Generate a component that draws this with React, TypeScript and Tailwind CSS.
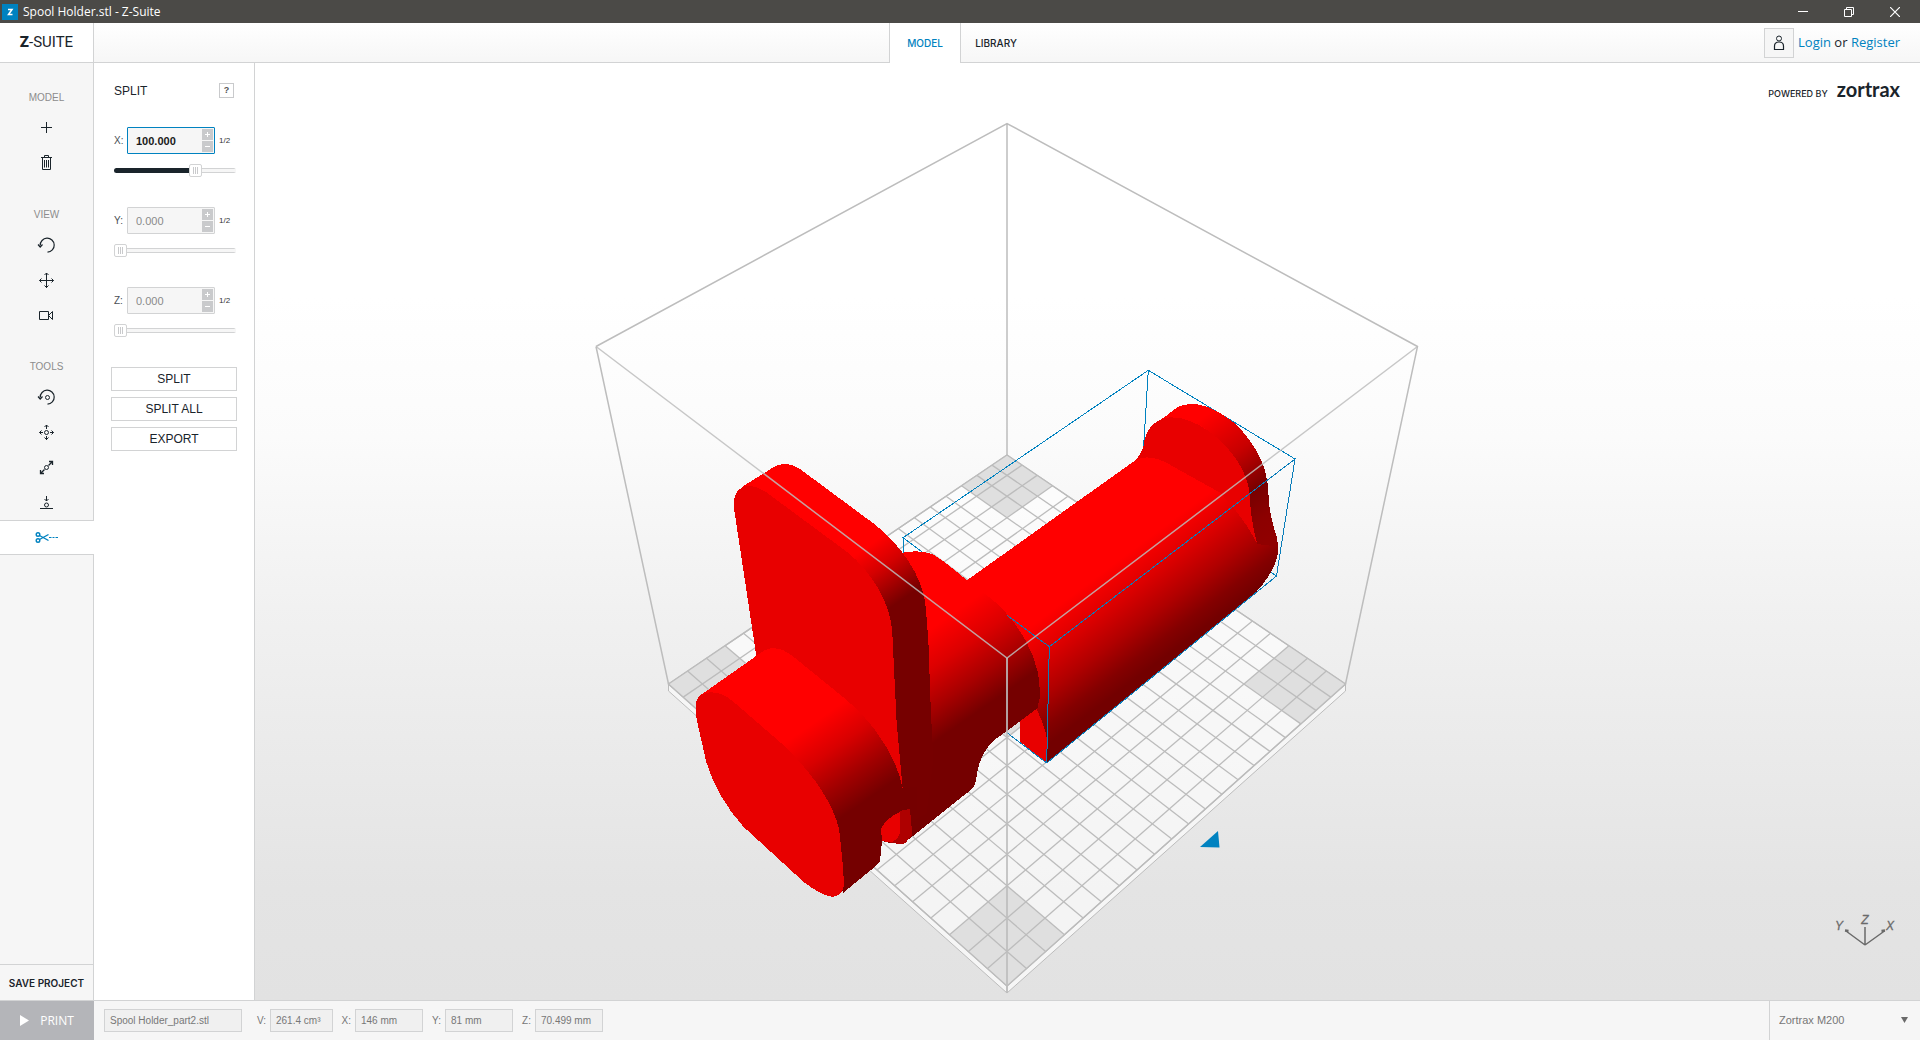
import { useState } from "react";
import type { CSSProperties, ReactNode } from "react";

const CELLS = 20;

// Projects a point of the build plate (0..1 on both sides) to the view
const project = (u: number, v: number) => {
  const w = 1 - 0.1209 * (u + v);
  const x = (175.8 * u - 419.3 * v + 1007) / w;
  const y = (146.3 * (u + v) + 455) / w;
  return `${x.toFixed(1)},${y.toFixed(1)}`;
};

const patch = (u: number, v: number, size: number) =>
  [project(u, v), project(u + size, v), project(u + size, v + size), project(u, v + size)].join(" ");

const gridLines = Array.from({ length: CELLS + 1 }, (_, i) => i / CELLS);

const Icon = ({ children, className = "text-[#1a242b]" }: { children: ReactNode; className?: string }) => (
  <svg width="25" height="21" viewBox="0 0 25 21" fill="none" stroke="currentColor" className={className}>
    {children}
  </svg>
);

const PlusIcon = () => (
  <Icon>
    <path d="M12.5 4v11M7 9.500h11" />
  </Icon>
);

const TrashIcon = () => (
  <Icon>
    <path d="M7 4.500h11M10.500 4V2.500h4V4M8.500 5v11.500h8V5M10.500 7v7.500M12.500 7v7.500M14.500 7v7.500" />
  </Icon>
);

const RotateArrow = () => (
  <>
    <path d="M6.200 10.500A7 7 0 1 1 13.500 17.200" strokeWidth="1.200" />
    <path d="M4 9.500l2.200 2.500 2.300-2.500" strokeWidth="1.200" />
  </>
);

const RotateIcon = () => (
  <Icon>
    <RotateArrow />
  </Icon>
);

const MoveIcon = () => (
  <Icon>
    <path d="M12.500 3v15M5.500 10.500h14M10.500 5l2-2 2 2M10.500 15.500l2 2 2-2M7.500 8.500l-2 2 2 2M17.500 8.500l2 2-2 2" />
  </Icon>
);

const CameraIcon = () => (
  <Icon>
    <path d="M5.500 6.500h9v8h-9zM14.500 10.500l4-4v8z" />
  </Icon>
);

const ObjectRotateIcon = () => (
  <Icon>
    <RotateArrow />
    <circle cx="13.5" cy="10.5" r="2" />
  </Icon>
);

const ObjectMoveIcon = () => (
  <Icon>
    <circle cx="12.500" cy="10.500" r="2" />
    <path d="M12.500 3v4M12.500 14v4M5.500 10.500h3.500M16 10.500h3.500M10.500 5l2-2 2 2M10.500 15.500l2 2 2-2M7.500 8.500l-2 2 2 2M17.500 8.500l2 2-2 2" />
  </Icon>
);

const ScaleIcon = () => (
  <Icon>
    <circle cx="12.500" cy="10.500" r="2" />
    <path d="M14.500 8.500l4-4M15 4.500h3.500V8M10.500 12.500l-4 4M6.500 13V16.500H10" strokeWidth="1.300" />
  </Icon>
);

const DropIcon = () => (
  <Icon>
    <circle cx="12.500" cy="13" r="2" />
    <path d="M12.500 4v5M10.500 7l2 2 2-2M6 16.500h13" />
  </Icon>
);

const ScissorsIcon = () => (
  <Icon className="text-[#0082c0]">
    <g strokeWidth="1.400">
      <circle cx="4" cy="7.500" r="1.800" />
      <circle cx="4" cy="13.500" r="1.800" />
      <path d="M5.500 8.500l9 5M5.500 12.500l9-5" />
    </g>
    <path d="M15 10.500h2.500M18.500 10.500h2M21.500 10.500h2.500" />
  </Icon>
);

interface ToolProps {
  label: string;
  icon: ReactNode;
  active?: boolean;
}

const Tool = ({ label, icon, active }: ToolProps) => (
  <button
    aria-label={label}
    className={
      active
        ? "w-[94px] h-[35px] pr-px flex items-center justify-center bg-white border-y border-[#d2d3d4]"
        : "w-[93px] h-[35px] flex items-center justify-center"
    }
  >
    {icon}
  </button>
);

const ToolGroup = ({ title, tools }: { title: string; tools: ToolProps[] }) => (
  <section>
    <h2 className="w-[93px] h-[26px] flex items-center justify-center text-[10px] text-[#8c8c8c]">{title}</h2>
    {tools.map((tool) => (
      <Tool key={tool.label} {...tool} />
    ))}
  </section>
);

const modelTools = [
  { label: "Add model", icon: <PlusIcon /> },
  { label: "Remove model", icon: <TrashIcon /> },
];

const viewTools = [
  { label: "Rotate view", icon: <RotateIcon /> },
  { label: "Pan view", icon: <MoveIcon /> },
  { label: "Camera", icon: <CameraIcon /> },
];

const objectTools = [
  { label: "Rotate", icon: <ObjectRotateIcon /> },
  { label: "Move", icon: <ObjectMoveIcon /> },
  { label: "Scale", icon: <ScaleIcon /> },
  { label: "Place on platform", icon: <DropIcon /> },
  { label: "Split", icon: <ScissorsIcon />, active: true },
];

interface AxisProps {
  axis: string;
  initial: number;
  max: number;
  active?: boolean;
}

const AxisControl = ({ axis, initial, max, active }: AxisProps) => {
  const [value, setValue] = useState(initial);
  const fill = { "--fill": `${(value / max) * 100}%` } as CSSProperties;

  return (
    <div className="h-20">
      <div className="flex items-center">
        <label htmlFor={`axis-${axis}`} className="w-[13px] text-[10px] text-[#4a4f54]">
          {axis}:
        </label>
        <div
          className={
            active
              ? "w-[88px] h-[27px] flex items-center border border-[#0082c0] rounded-[1px] bg-[#f6f6f6] pr-px"
              : "w-[88px] h-[27px] flex items-center border border-[#d2d3d4] rounded-[1px] bg-[#f6f6f6] pr-px"
          }
        >
          <input
            id={`axis-${axis}`}
            value={value.toFixed(3)}
            onChange={(e) => setValue(Number(e.target.value) || 0)}
            className={
              active
                ? "flex-1 min-w-0 pl-2 text-[11px] font-bold text-[#1a1a1a] outline-none"
                : "flex-1 min-w-0 pl-2 text-[11px] text-[#8a8a8a] outline-none"
            }
          />
          <div className="flex flex-col gap-px">
            <button
              aria-label={`Increase ${axis}`}
              onClick={() => setValue(Math.min(max, value + 1))}
              className="w-[11px] h-[11px] flex items-center justify-center bg-[#c9cacc]"
            >
              <svg width="5" height="5" stroke="white">
                <path d="M2.500 0v5M0 2.500h5" />
              </svg>
            </button>
            <button
              aria-label={`Decrease ${axis}`}
              onClick={() => setValue(Math.max(0, value - 1))}
              className="w-[11px] h-[11px] flex items-center justify-center bg-[#c9cacc]"
            >
              <svg width="5" height="5" stroke="white">
                <path d="M0 2.500h5" />
              </svg>
            </button>
          </div>
        </div>
        <button onClick={() => setValue(max / 2)} className="pl-1 text-[8px] text-[#333]">
          1/2
        </button>
      </div>
      <input
        type="range"
        aria-label={`${axis} position`}
        min={0}
        max={max}
        value={value}
        onChange={(e) => setValue(Number(e.target.value))}
        style={fill}
        className="block mt-[10px] w-[122px] h-[13px] appearance-none bg-transparent [&::-webkit-slider-runnable-track]:h-[5px] [&::-webkit-slider-runnable-track]:rounded-full [&::-webkit-slider-runnable-track]:bg-[linear-gradient(to_right,#1a242b_var(--fill),transparent_var(--fill)),linear-gradient(#d2d3d4_1px,#f6f6f6_1px,#f6f6f6_4px,#d2d3d4_4px)] [&::-webkit-slider-thumb]:appearance-none [&::-webkit-slider-thumb]:-mt-1 [&::-webkit-slider-thumb]:w-[13px] [&::-webkit-slider-thumb]:h-[13px] [&::-webkit-slider-thumb]:rounded-[2px] [&::-webkit-slider-thumb]:border [&::-webkit-slider-thumb]:border-[#d2d3d4] [&::-webkit-slider-thumb]:bg-white [&::-webkit-slider-thumb]:bg-[repeating-linear-gradient(to_right,#c9cacc_0px,#c9cacc_1px,#fff_1px,#fff_2px)] [&::-webkit-slider-thumb]:bg-size-[5px_7px] [&::-webkit-slider-thumb]:bg-center [&::-webkit-slider-thumb]:bg-no-repeat"
      />
    </div>
  );
};

const Scene = () => (
  <svg viewBox="255 63 1665 937" preserveAspectRatio="xMidYMid slice" className="block w-full h-full">
    <defs>
      <linearGradient id="holder" gradientUnits="userSpaceOnUse" x1="582" y1="776" x2="771" y2="1028">
        <stop offset="0" stopColor="#ff0000" />
        <stop offset="0.3" stopColor="#dc0000" />
        <stop offset="0.6" stopColor="#b00000" />
        <stop offset="0.85" stopColor="#840000" />
        <stop offset="1" stopColor="#730000" />
      </linearGradient>
      <linearGradient id="holderRim" gradientUnits="userSpaceOnUse" x1="468" y1="624" x2="714" y2="952">
        <stop offset="0" stopColor="#ff0000" />
        <stop offset="0.35" stopColor="#c80000" />
        <stop offset="0.65" stopColor="#780000" />
        <stop offset="0.85" stopColor="#8c0000" />
        <stop offset="1" stopColor="#900000" />
      </linearGradient>
      <linearGradient id="collar" gradientUnits="userSpaceOnUse" x1="533" y1="762" x2="696" y2="995">
        <stop offset="0" stopColor="#ff0000" />
        <stop offset="0.35" stopColor="#dc0000" />
        <stop offset="0.7" stopColor="#a80000" />
        <stop offset="1" stopColor="#750000" />
      </linearGradient>
      <linearGradient id="plate" gradientUnits="userSpaceOnUse" x1="355" y1="508" x2="464" y2="663">
        <stop offset="0" stopColor="#ff0000" />
        <stop offset="0.4" stopColor="#d40000" />
        <stop offset="1" stopColor="#760000" />
      </linearGradient>
      <linearGradient id="cap" gradientUnits="userSpaceOnUse" x1="550" y1="786" x2="711" y2="1016">
        <stop offset="0" stopColor="#ff0000" />
        <stop offset="0.35" stopColor="#d80000" />
        <stop offset="0.7" stopColor="#a00000" />
        <stop offset="1" stopColor="#750000" />
      </linearGradient>
    </defs>

    {/* Build platform */}
    <g stroke="#bcbcbc" strokeWidth="1.300">
      <path d="M668.500 684v7L1007 993l338.500-302v-7L1007 986z" fill="#f6f6f6" strokeWidth="1" />
      <path d="M1007 986v7" />
      <polygon points={patch(0, 0, 1)} fill="#ffffff" fillOpacity="0.6" />
      <g fill="#dfdfdf" stroke="none">
        <polygon points={patch(0, 0, 0.15)} />
        <polygon points={patch(0.85, 0, 0.15)} />
        <polygon points={patch(0, 0.85, 0.15)} />
        <polygon points={patch(0.85, 0.85, 0.15)} />
        <polygon points={patch(0.4, 0.4, 0.2)} />
      </g>
      {gridLines.map((t) => (
        <polyline key={`u${t}`} points={`${project(t, 0)} ${project(t, 1)}`} />
      ))}
      {gridLines.map((t) => (
        <polyline key={`v${t}`} points={`${project(0, t)} ${project(1, t)}`} />
      ))}
    </g>

    {/* Far side of the work space */}
    <path
      d="M1007 455V123.500M596 346.500L1007 123.500 1417.500 346.500L1345.500 684M596 346.500L668.500 684"
      fill="none"
      stroke="#bdbdbd"
      strokeWidth="1.500"
    />

    {/* Far side of the selection box */}
    <path
      d="M1276.500 576L1141 490 1148.300 370.300 1295 459M1148.300 370.300L903 537.700 1049.300 646.700M903 537.700V560"
      fill="none"
      stroke="#0082c0"
      shapeRendering="crispEdges"
    />

    {/* Holder */}
    <g transform="translate(860 350) scale(0.33333)" shapeRendering="crispEdges">
      <path
        d="M322 690L823 333Q845 312 850 290 855 245 880 223L922 195 950 173Q970 162 1000 162 1060 166 1130 225 1190 285 1215 360 1225 400 1226 440C1228 490 1240 530 1250 560Q1256 590 1252 620C1240 665 1210 705 1175 740L560 1239 480 1175V1115L440 1000 300 760z"
        fill="url(#holder)"
      />
      <path
        d="M880 223L922 195 950 173Q970 162 1000 162 1060 166 1130 225 1190 285 1215 360 1225 400 1226 440C1228 490 1240 530 1250 560L1254 590 1192 582Q1172 510 1170 450C1165 360 1050 200 940 200z"
        fill="url(#holderRim)"
      />
      <path
        d="M823 333Q845 312 850 290 855 245 880 223 900 205 930 202C1010 200 1090 270 1130 330 1165 385 1169 420 1170 450Q1174 520 1192 582 1150 500 1080 428L940 350Q870 305 823 333z"
        fill="#e80000"
      />
      <path d="M480 1090V1175L560 1239 562 1170Q552 1120 528 1075z" fill="#e80000" />
    </g>

    <g transform="translate(660 440) scale(0.33333)" shapeRendering="crispEdges">
      {/* Collar */}
      <path
        d="M700 345Q770 325 815 342 840 352 921 421L970 458C1060 520 1150 650 1139 775L1132 805 1041 873C980 910 960 950 951 1000Q948 1035 935 1048L900 1075 750 1195Q720 1220 666 1203z"
        fill="url(#collar)"
      />

      {/* Plate */}
      <path
        d="M232 155L250 138 340 82Q375 60 420 87L640 250C720 310 790 410 797 500L805 600 812 800 820 960 800 1120 728 1160 300 650z"
        fill="url(#plate)"
      />
      <path
        d="M289 648L222 205Q218 155 250 140 285 130 330 165L560 335C630 390 695 490 697 580L710 850 728 1045 740 1090H400z"
        fill="#e80000"
      />

      {/* Cap */}
      <path
        d="M118 768L300 640Q345 605 400 650L560 780C640 845 710 950 728 1045L770 1040 770 1110H735Q690 1120 663 1165L666 1203 660 1265 645 1280 550 1358 300 1000z"
        fill="url(#cap)"
      />
      <path
        d="M108 825V790Q112 765 135 760 175 748 220 785L370 915C460 1000 535 1110 540 1190L548 1270 552 1330Q550 1370 515 1370 480 1365 430 1325L370 1270 250 1160C195 1100 145 1010 133 940Q112 850 108 825z"
        fill="#e80000"
      />
      <path d="M720 1113L750 1107 757 1185 735 1210 720 1212 690 1208z" fill="#ae0000" />
      <path d="M663 1165Q680 1135 720 1115V1180Q712 1203 690 1207L666 1203z" fill="#e80000" />
    </g>

    {/* Near side of the selection box */}
    <path
      d="M1007 615.300L1049.300 646.700 1295 459 1276.500 576 1046.700 763 1007 732.700M1049.300 646.700L1046.700 763"
      fill="none"
      stroke="#0a7dba"
      shapeRendering="crispEdges"
    />

    {/* Near side of the work space */}
    <g fill="none" stroke="#bdbdbd" strokeOpacity="0.850">
      <path d="M596 346.500L1007 658 1417.500 346.500" strokeWidth="1.500" />
      <path d="M1007 658V993" strokeWidth="2" />
    </g>

    <path d="M1200 847L1218 831 1219.500 847.500z" fill="#0082c0" />

    {/* Axes */}
    <g stroke="#6a6a6a" fill="none" strokeWidth="1.500">
      <path d="M1865 945V927M1865 945L1846 931M1865 945L1884.500 931" />
      <path d="M1845 930.500l3.500 0.500M1885 930.500l-3.500 0.500" strokeWidth="2.500" />
    </g>
    <g className="font-['Liberation_Sans'] text-[12px] italic" fill="#6a6a6a" stroke="#6a6a6a" strokeWidth="0.300" textAnchor="middle">
      <text x="1839" y="930">Y</text>
      <text x="1865" y="924">Z</text>
      <text x="1890" y="930">X</text>
    </g>
  </svg>
);

const measures = [
  { label: "V", value: "261.4 cm³", width: "w-[63px]" },
  { label: "X", value: "146 mm", width: "w-[68px]" },
  { label: "Y", value: "81 mm", width: "w-[68px]" },
  { label: "Z", value: "70.499 mm", width: "w-[68px]" },
];

const App = () => {
  return (
    <div className="h-screen flex flex-col bg-white font-['Liberation_Sans',Arial,sans-serif] leading-none text-[#1a242b]">
      {/* Title bar */}
      <div className="h-[23px] shrink-0 flex items-center bg-[#4b4a47] text-white pl-[2px] pr-[2px]">
        <svg width="16" height="16" viewBox="0 0 16 16" className="shrink-0">
          <rect width="16" height="16" fill="#0082c0" />
          <path d="M6 5.500h4L6.500 10.500h4" fill="none" stroke="white" strokeWidth="1.500" />
        </svg>
        <span className="flex-1 pl-[5px] font-['Open_Sans',sans-serif] text-[12px]">Spool Holder.stl - Z-Suite</span>
        <button aria-label="Minimize" className="w-[46px] h-full flex items-center justify-center">
          <svg width="10" height="10" stroke="white">
            <path d="M0 4.500h10" />
          </svg>
        </button>
        <button aria-label="Restore" className="w-[46px] h-full flex items-center justify-center">
          <svg width="10" height="10" stroke="white" fill="none">
            <path d="M0.500 2.500h7v7h-7zM2.500 2.500v-2h7v7h-2" />
          </svg>
        </button>
        <button aria-label="Close" className="w-[46px] h-full flex items-center justify-center">
          <svg width="10" height="10" stroke="white" strokeWidth="1.200">
            <path d="M0 0l10 10M10 0L0 10" />
          </svg>
        </button>
      </div>

      {/* Header */}
      <header className="h-10 shrink-0 grid grid-cols-[1fr_auto_1fr] bg-linear-to-b from-white to-[#f6f6f6]">
        <div className="flex border-b border-[#d2d3d4]">
          <div className="w-[94px] flex items-center justify-center bg-white border-r border-[#d2d3d4] font-['Roboto',sans-serif] text-[15px]">
            <span className="font-black">Z</span>
            <span>-SUITE</span>
          </div>
        </div>
        <nav className="flex font-['Inter',sans-serif] text-[10px] font-medium">
          <button className="w-[72px] border-x border-[#d2d3d4] bg-white text-[#0082c0]">MODEL</button>
          <button className="w-[70px] border-b border-[#d2d3d4]">LIBRARY</button>
        </nav>
        <div className="flex items-center justify-end gap-1 pr-5 border-b border-[#d2d3d4]">
          <button
            aria-label="Account"
            className="w-[30px] h-[30px] flex items-center justify-center border border-[#d2d3d4] bg-[#f6f6f6]"
          >
            <svg width="12" height="16" viewBox="0 0 12 16" fill="none" stroke="#1a242b">
              <circle cx="6" cy="3.500" r="2.500" />
              <path d="M1.500 14.500v-3.500c0-2.500 1.500-4 4.500-4s4.500 1.500 4.500 4v3.500z" strokeWidth="1.200" />
            </svg>
          </button>
          <p className="font-['Open_Sans',sans-serif] text-[13px]">
            <a href="#login" className="text-[#0082c0]">Login</a> or{" "}
            <a href="#register" className="text-[#0082c0]">Register</a>
          </p>
        </div>
      </header>

      <div className="flex-1 min-h-0 flex">
        {/* Toolbar */}
        <aside className="w-[94px] shrink-0 flex flex-col bg-[#f6f6f6] border-r border-[#d2d3d4]">
          <div className="flex-1 flex flex-col gap-[21px] pt-[22px]">
            <ToolGroup title="MODEL" tools={modelTools} />
            <ToolGroup title="VIEW" tools={viewTools} />
            <ToolGroup title="TOOLS" tools={objectTools} />
          </div>
          <button className="h-9 border-t border-[#d2d3d4] font-['Inter',sans-serif] text-[10px] font-semibold whitespace-nowrap">
            SAVE PROJECT
          </button>
        </aside>

        {/* Split panel */}
        <aside className="w-[161px] shrink-0 bg-white border-r border-[#d2d3d4] px-[17px] pt-5">
          <div className="flex items-center justify-between pl-[3px] pr-[3px]">
            <h1 className="text-[12px]">SPLIT</h1>
            <button aria-label="Help" className="w-[15px] h-[15px] flex items-center justify-center border border-[#c9cacc] text-[9px] font-bold text-[#555]">
              ?
            </button>
          </div>
          <div className="pl-[3px] pt-[29px]">
            <AxisControl axis="X" initial={100} max={146} active />
            <AxisControl axis="Y" initial={0} max={81} />
            <AxisControl axis="Z" initial={0} max={70} />
          </div>
          <div className="flex flex-col gap-[6px]">
            <button className="h-6 border border-[#d2d3d4] text-[12px]">SPLIT</button>
            <button className="h-6 border border-[#d2d3d4] text-[12px]">SPLIT ALL</button>
            <button className="h-6 border border-[#d2d3d4] text-[12px]">EXPORT</button>
          </div>
        </aside>

        {/* Viewport */}
        <main className="relative flex-1 min-w-0 bg-[linear-gradient(#fff_25%,#fbfbfb_40%,#f1f1f1_58%,#e4e4e4_88%,#e2e2e2_100%)]">
          <Scene />
          <div className="absolute top-4 right-5 flex items-baseline gap-[9px]">
            <span className="font-['Inter',sans-serif] text-[9px] font-medium">POWERED BY</span>
            <span className="font-['Lato',sans-serif] text-[20px] font-bold">zortrax</span>
          </div>
        </main>
      </div>

      {/* Status bar */}
      <footer className="h-10 shrink-0 flex items-center bg-[#f6f6f6] border-t border-[#d2d3d4] text-[10px] text-[#777]">
        <button className="w-[94px] h-full flex items-center justify-center gap-[11px] bg-[#b4b5b9] font-['Open_Sans',sans-serif] text-[12px] text-white">
          <svg width="9" height="11" fill="white">
            <path d="M0 0l9 5.500L0 11z" />
          </svg>
          PRINT
        </button>
        <input
          aria-label="File name"
          readOnly
          value="Spool Holder_part2.stl"
          className="ml-[10px] mr-[6px] w-[138px] h-[23px] px-[5px] border border-[#d2d3d4] bg-[#f0f0f0]"
        />
        {measures.map((m) => (
          <label key={m.label} className="flex items-center">
            <span className="w-[22px] pr-1 text-right">{m.label}:</span>
            <input readOnly value={m.value} className={`${m.width} h-[23px] px-[5px] border border-[#d2d3d4] bg-[#f0f0f0]`} />
          </label>
        ))}
        <div className="relative ml-auto w-[151px] h-full border-l border-[#d2d3d4]">
          <select aria-label="Printer" className="w-full h-full appearance-none pl-[9px] text-[11px]">
            <option>Zortrax M200</option>
          </select>
          <svg width="7" height="6" className="absolute right-3 top-4 pointer-events-none" fill="#6a6a6a">
            <path d="M0 0h7L3.500 6z" />
          </svg>
        </div>
      </footer>
    </div>
  );
};

export default App;
